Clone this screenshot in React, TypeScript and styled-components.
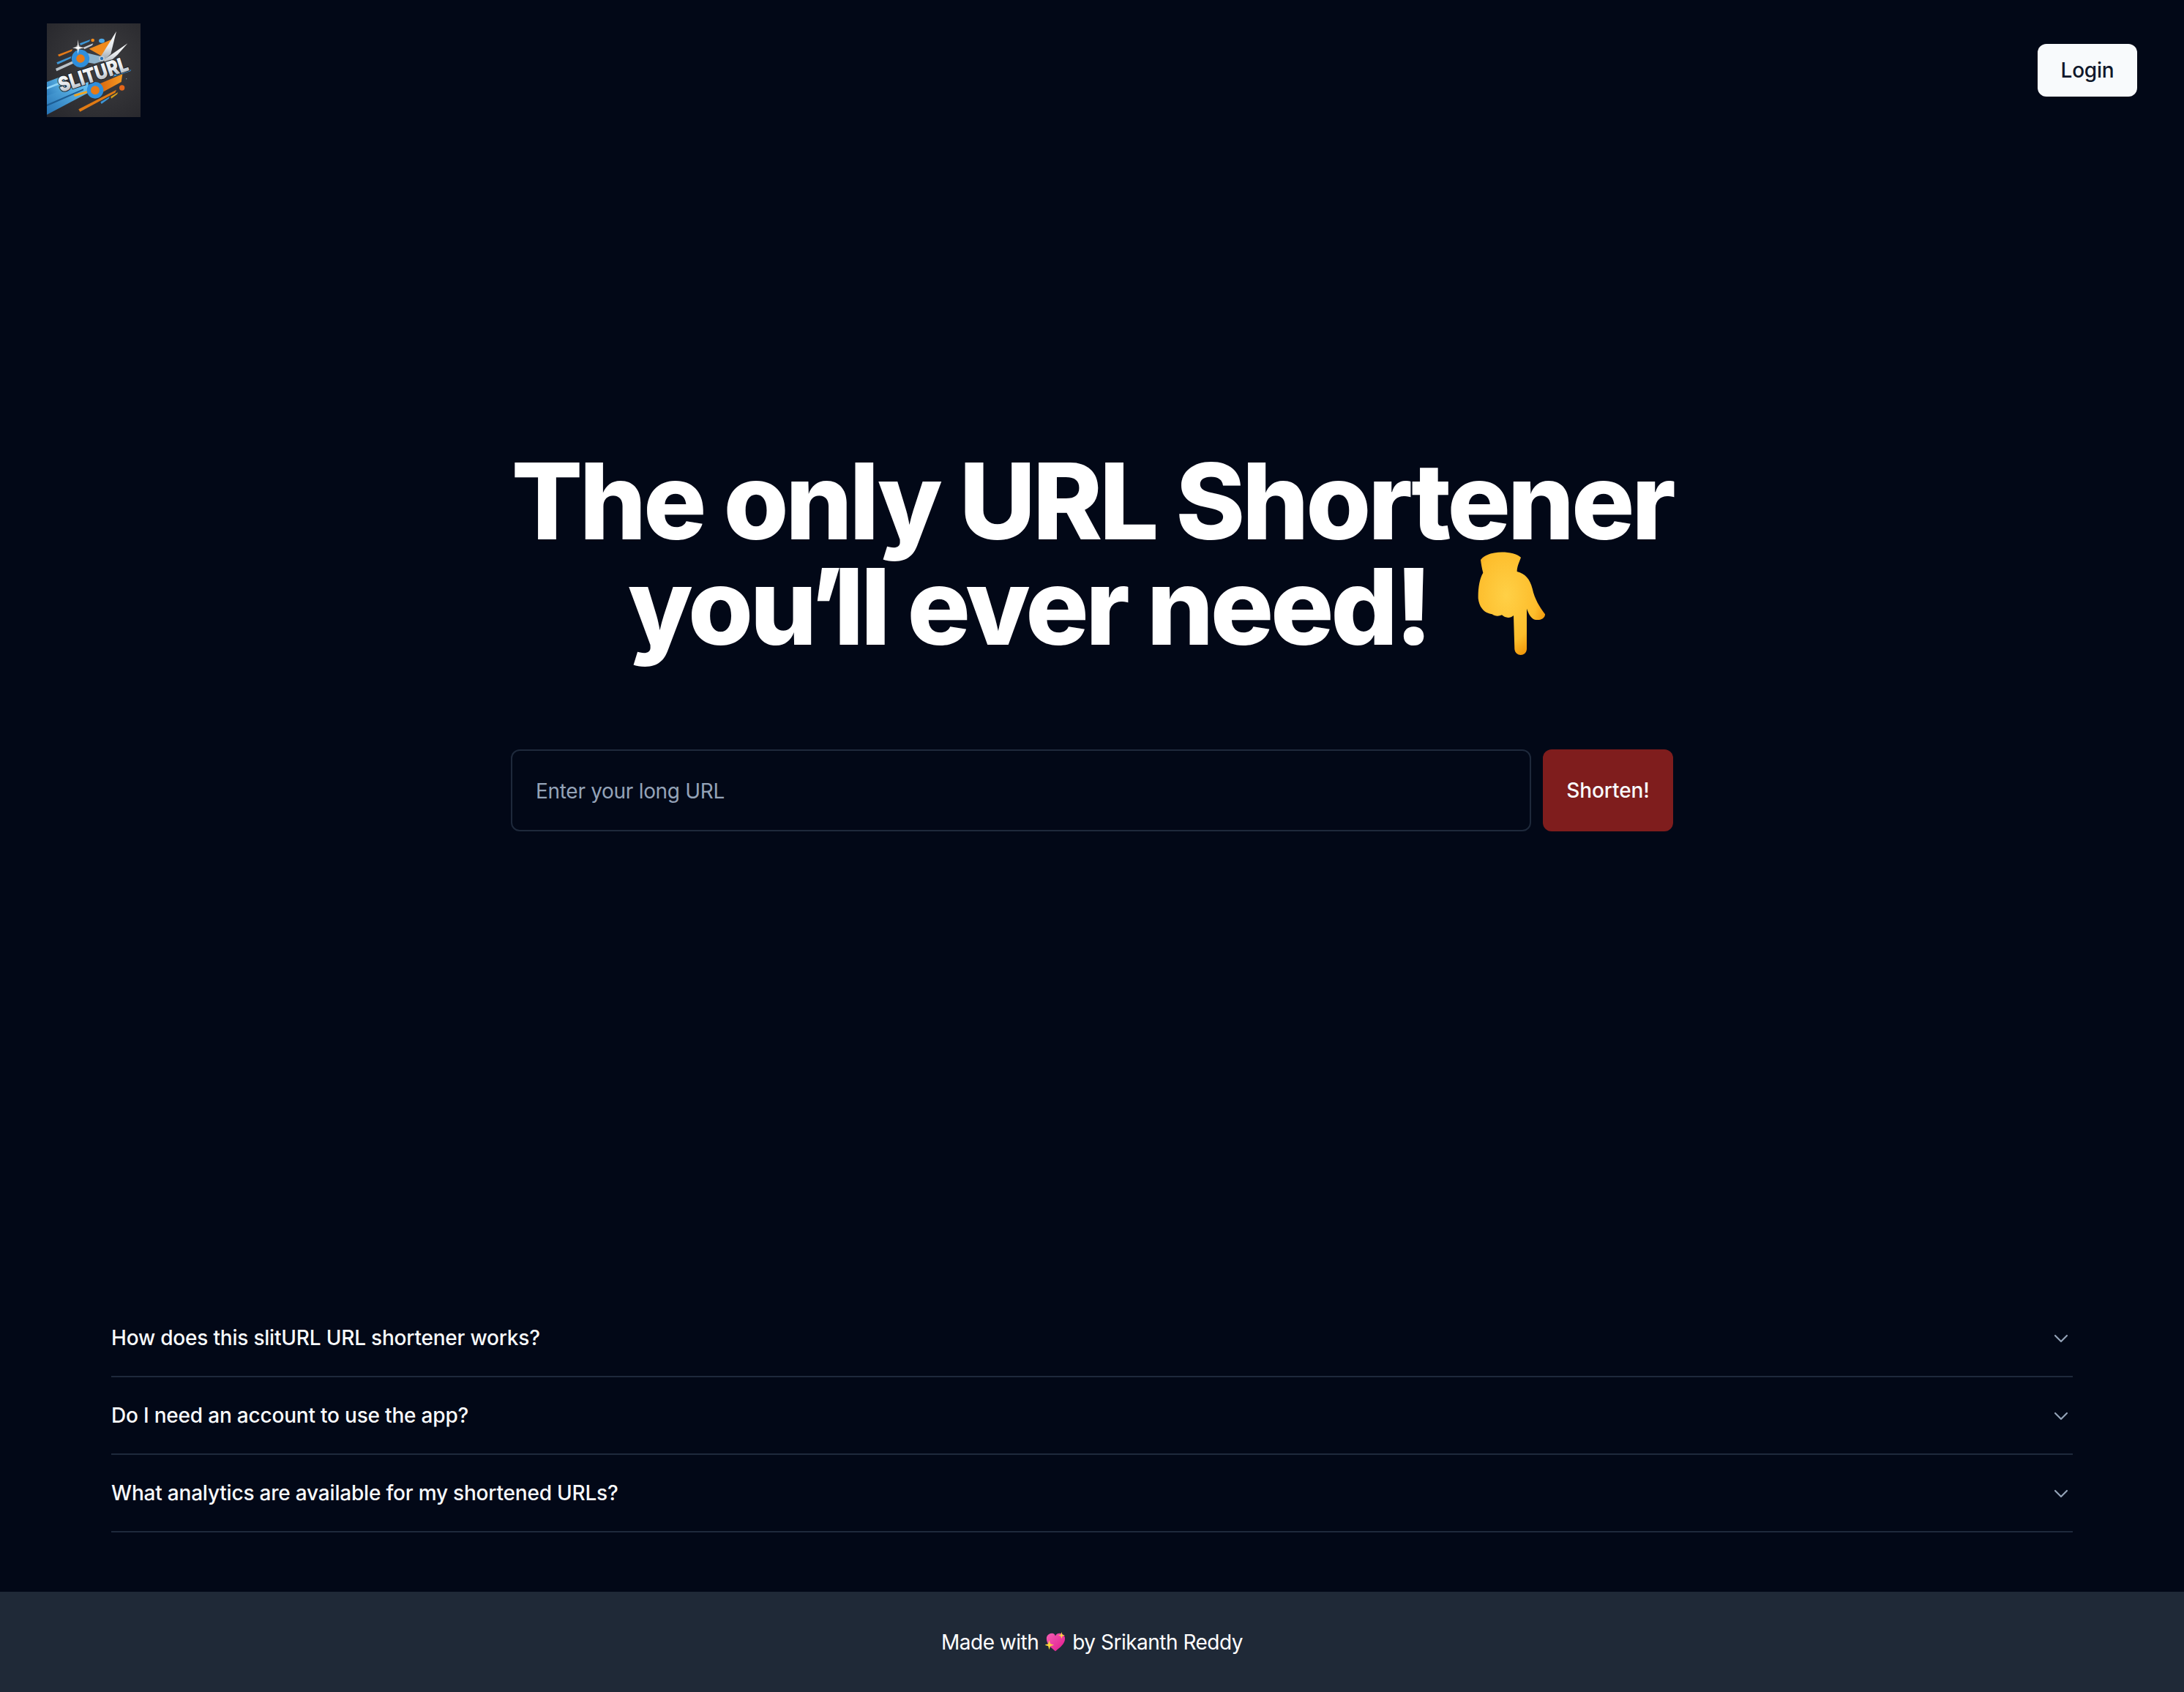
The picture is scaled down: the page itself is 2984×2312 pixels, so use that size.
import styled, { createGlobalStyle } from "styled-components";
import { ChevronDown } from "lucide-react";

const GlobalStyle = createGlobalStyle`
    html, body {
        margin: 0;
        padding: 0;
        background-color: #020817;
    }

    * {
        box-sizing: border-box;
    }
`;

const PAGE = styled.div`
    width: 2984px;
    height: 2312px;
    display: flex;
    flex-direction: column;
    background-color: #020817;
    color: #f8fafc;
    font-family: Inter, "Liberation Sans", sans-serif;
    overflow: hidden;
`;

const HEADER = styled.header`
    height: 192px;
    flex-shrink: 0;
    display: flex;
    justify-content: space-between;
    align-items: center;
    padding: 0 64px;
`;

const LOGO = styled.svg`
    width: 128px;
    height: 128px;
    display: block;
`;

const LOGIN = styled.button`
    height: 72px;
    width: 136px;
    border: none;
    border-radius: 12px;
    background-color: #f8fafc;
    color: #0f172a;
    font-family: inherit;
    font-size: 28px;
    font-weight: 500;
    letter-spacing: -0.2px;
`;

const HERO = styled.main`
    flex: 1;
    display: flex;
    flex-direction: column;
    align-items: center;
    padding-top: 421px;
`;

const TITLE = styled.h1`
    margin: 0 0 123px;
    font-size: 144px;
    line-height: 144px;
    font-weight: 800;
    letter-spacing: -4.3px;
    text-align: center;
    color: #ffffff;
`;

const TIGHT = styled.span`
    letter-spacing: -13.3px;
`;

const HAND = styled.svg`
    width: 160px;
    height: 170px;
    margin: -20px -16px -30px 2px;
    vertical-align: baseline;
`;

const FORM = styled.form`
    width: 1588px;
    display: flex;
    gap: 16px;
`;

const INPUT = styled.input`
    flex: 1;
    height: 112px;
    padding: 2px 32px 0;
    border: 2px solid #1e293b;
    border-radius: 12px;
    background-color: transparent;
    color: #f8fafc;
    font-family: inherit;
    font-size: 28px;
    letter-spacing: -0.3px;
    outline: none;

    &::placeholder {
        color: #94a3b8;
        opacity: 1;
    }
`;

const SHORTEN = styled.button`
    width: 178px;
    height: 112px;
    border: none;
    border-radius: 12px;
    background-color: #7f1d1d;
    color: #f8fafc;
    font-family: inherit;
    font-size: 28px;
    font-weight: 500;
    letter-spacing: -0.1px;
`;

const FAQ = styled.section`
    margin: 0 152px 81px;
    display: flex;
    flex-direction: column;
`;

const FAQROW = styled.div`
    height: 106px;
    display: flex;
    justify-content: space-between;
    align-items: center;
    border-bottom: 2px solid #1e293b;
    font-size: 28px;
    font-weight: 500;
    letter-spacing: -0.2px;

    & svg {
        color: #94a3b8;
        flex-shrink: 0;
        margin-top: 2px;
    }
`;

const FOOTER = styled.footer`
    height: 137px;
    flex-shrink: 0;
    display: flex;
    justify-content: center;
    align-items: center;
    gap: 9px;
    background-color: #1f2937;
    color: #ffffff;
    font-size: 28px;
    letter-spacing: -0.5px;
`;

const HEART = styled.svg`
    width: 28px;
    height: 28px;
    display: block;
`;

const QUESTIONS = [
    "How does this slitURL URL shortener works?",
    "Do I need an account to use the app?",
    "What analytics are available for my shortened URLs?",
];

const LogoMark = () => (
    <LOGO viewBox="0 0 384 384" role="img" aria-label="slitURL logo">
        <defs>
            <radialGradient id="logoBg" cx="55%" cy="45%" r="75%">
                <stop offset="0%" stopColor="#3f3f41" />
                <stop offset="100%" stopColor="#27272c" />
            </radialGradient>
            <linearGradient id="blueBand" x1="0" y1="1" x2="1" y2="0">
                <stop offset="0%" stopColor="#2472b4" />
                <stop offset="100%" stopColor="#6cc6f4" />
            </linearGradient>
            <linearGradient id="orangeBand" x1="0" y1="0" x2="1" y2="0">
                <stop offset="0%" stopColor="#d9660f" />
                <stop offset="100%" stopColor="#f59a22" />
            </linearGradient>
            <linearGradient id="metal" x1="0" y1="0" x2="0" y2="1">
                <stop offset="0%" stopColor="#ffffff" />
                <stop offset="55%" stopColor="#e4e8ec" />
                <stop offset="100%" stopColor="#98a2ac" />
            </linearGradient>
        </defs>
        <rect width="384" height="384" fill="url(#logoBg)" />
        <polygon points="0,240 70,214 80,290 0,320" fill="url(#blueBand)" />
        <polygon points="0,296 170,240 170,284 0,374" fill="url(#blueBand)" />
        <polygon points="0,262 60,238 62,246 0,270" fill="#8fd4f7" />
        <polygon points="0,332 150,268 150,274 0,340" fill="#1d5c92" />
        <polygon points="36,185 115,150 118,160 40,196" fill="#b9c2ca" />
        <polygon points="45,128 105,106 102,114 50,136" fill="#e57a18" />
        <polygon points="40,160 100,135 98,143 44,168" fill="#3d97d8" />
        <polygon points="135,82 178,66 174,74 138,90" fill="#3d97d8" />
        <polygon points="150,98 190,82 186,90 154,106" fill="#c5ccd3" />
        <polygon points="214,248 310,208 305,240 224,284" fill="url(#orangeBand)" />
        <polygon points="110,292 218,262 214,270 115,300" fill="#f3a51f" />
        <polygon points="130,352 285,272 280,284 136,362" fill="#e07a14" />
        <polygon points="220,322 258,300 254,308 224,330" fill="#3d97d8" />
        <polygon points="262,300 292,282 288,290 264,308" fill="#d8a21c" />
        <polygon points="173,104 263,67 233,139" fill="#ef8a1c" />
        <polygon points="222,134 285,32 262,125 236,150" fill="url(#metal)" />
        <polygon points="232,150 331,82 290,128 246,168" fill="url(#metal)" />
        <polygon points="160,120 225,136 236,152 195,165 165,160" fill="#8fb4cc" />
        <circle cx="138" cy="144" r="27" fill="#e87a15" stroke="#2f8fdc" strokeWidth="19" />
        <circle cx="225" cy="144" r="9" fill="#2672b8" stroke="#c5ccd3" strokeWidth="5" />
        <circle cx="128" cy="99" r="10" fill="#ffffff" opacity="0.4" />
        <polygon points="128,66 131,96 155,100 131,104 128,126 125,104 105,100 125,96" fill="#ffffff" />
        <circle cx="188" cy="69" r="7" fill="#ef8a1c" />
        <ellipse cx="225" cy="71" rx="12" ry="9" fill="#4ea9e8" />
        <circle cx="308" cy="264" r="11" fill="#e5661a" />
        <circle cx="326" cy="227" r="2" fill="#7fa0b8" />
        <polygon points="268,212 346,190 342,196 272,218" fill="#3fa7e6" />
        <circle cx="198" cy="274" r="26" fill="#e87a15" stroke="#2f8fdc" strokeWidth="16" />
        <text
            x="0"
            y="0"
            transform="translate(58 283) rotate(-18)"
            fontFamily="Inter, sans-serif"
            fontSize="84"
            fontWeight="900"
            fill="url(#metal)"
            stroke="#1b1f25"
            strokeWidth="6"
            paintOrder="stroke"
            textLength="296"
            lengthAdjust="spacingAndGlyphs"
        >
            SLITURL
        </text>
    </LOGO>
);

const PointingHand = () => (
    <HAND viewBox="0 0 480 510" aria-hidden="true">
        <defs>
            <radialGradient id="handFill" cx="42%" cy="42%" r="65%">
                <stop offset="0%" stopColor="#ffd046" />
                <stop offset="70%" stopColor="#fdbd2c" />
                <stop offset="100%" stopColor="#ee9306" />
            </radialGradient>
        </defs>
        <path
            d="M123 72 C150 32 255 32 288 62 C280 85 272 100 272 120 C305 128 325 150 335 190 C345 235 365 265 387 295 C388 312 365 322 345 317 C330 312 320 295 312 272 L312 438 C310 470 265 470 262 438 L258 300 C245 312 225 312 210 298 C195 305 180 302 170 295 C140 290 118 270 113 230 C112 190 118 150 133 125 C128 105 125 90 123 72 Z"
            fill="url(#handFill)"
        />
    </HAND>
);

const SparkleHeart = () => (
    <HEART viewBox="0 0 30 30" aria-hidden="true">
        <defs>
            <linearGradient id="heartFill" x1="0" y1="0" x2="1" y2="1">
                <stop offset="0%" stopColor="#f65fb4" />
                <stop offset="100%" stopColor="#e0188c" />
            </linearGradient>
        </defs>
        <path
            d="M15 28 C8 23 2 17 2 10 C2 5 6 2 10 2 C12 2 14 3 15 6 C16 3 19 2 21 2 C25 2 29 5 29 10 C29 17 22 23 15 28 Z"
            fill="url(#heartFill)"
        />
        <path d="M6 12 L7.6 17.4 L13 19 L7.6 20.6 L6 26 L4.4 20.6 L-1 19 L4.4 17.4 Z" fill="#fcd53f" />
        <path d="M24 0 L25.2 4 L29 5 L25.2 6 L24 10 L22.8 6 L19 5 L22.8 4 Z" fill="#fcd53f" />
    </HEART>
);

const App = () => {
    return (
        <PAGE>
            <GlobalStyle />
            <HEADER>
                <LogoMark />
                <LOGIN type="button">Login</LOGIN>
            </HEADER>
            <HERO>
                <TITLE>
                    The only URL Shortener
                    <br />
                    yo<TIGHT>u’</TIGHT>ll ever need! <PointingHand />
                </TITLE>
                <FORM>
                    <INPUT placeholder="Enter your long URL" />
                    <SHORTEN type="button">Shorten!</SHORTEN>
                </FORM>
            </HERO>
            <FAQ>
                {QUESTIONS.map((question) => (
                    <FAQROW key={question}>
                        {question}
                        <ChevronDown size={32} strokeWidth={1.6} />
                    </FAQROW>
                ))}
            </FAQ>
            <FOOTER>
                Made with <SparkleHeart /> by Srikanth Reddy
            </FOOTER>
        </PAGE>
    );
};

export default App;
